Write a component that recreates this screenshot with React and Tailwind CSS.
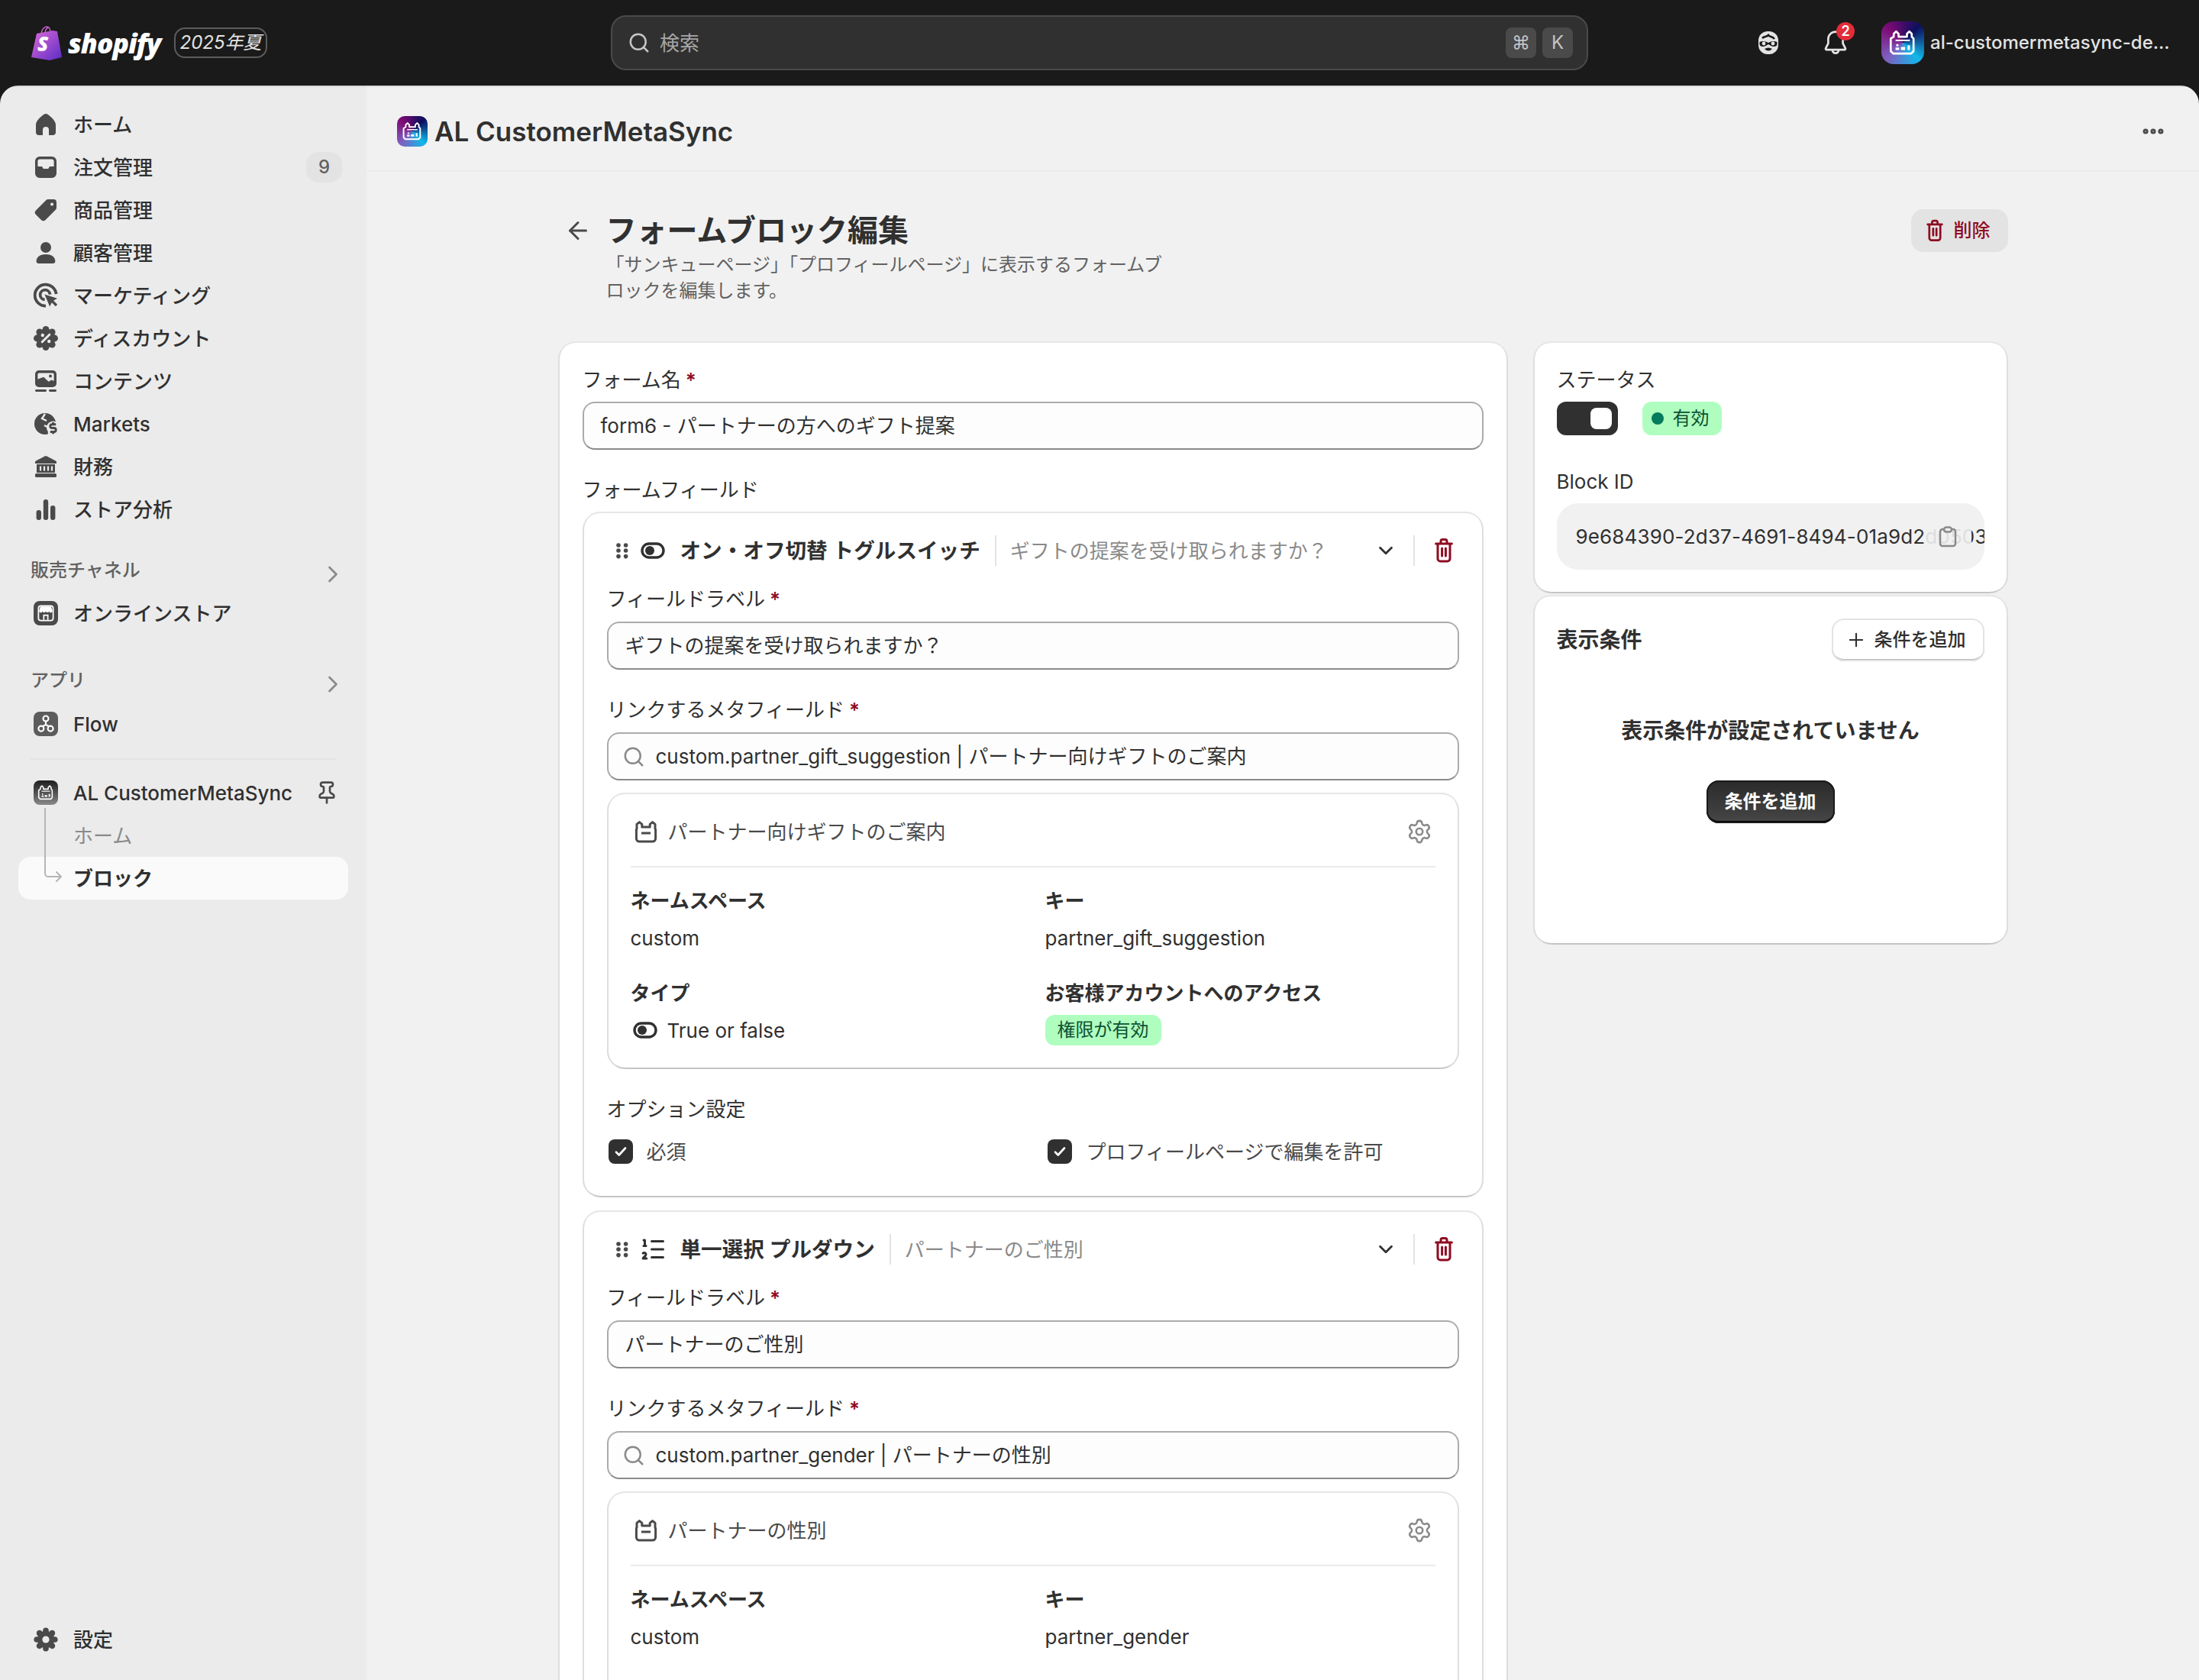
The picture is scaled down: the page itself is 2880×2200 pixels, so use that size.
import React from 'react';
import { Search, ChevronRight, ChevronDown, Plus, ArrowLeft, Settings, Pin, ListOrdered, Ellipsis } from 'lucide-react';

const GREY = '#4a4a4a';

function Svg({ className = 'w-10 h-10', children, view = '0 0 20 20' }) {
  return <svg viewBox={view} className={`${className} shrink-0`} fill="none">{children}</svg>;
}

function HomeIcon() {
  return <Svg><path fill={GREY} d="M10 3c-.5 0-1 .2-1.400.5C6.500 5.200 3.500 7.600 3.500 10.300V15a2 2 0 0 0 2 2H8v-3.500a2 2 0 0 1 4 0V17h2.500a2 2 0 0 0 2-2v-4.700c0-2.700-3-5.100-5.100-6.800A2.200 2.200 0 0 0 10 3z" /></Svg>;
}
function OrdersIcon() {
  return <Svg><path fill={GREY} fillRule="evenodd" d="M6 3h8a3 3 0 0 1 3 3v8a3 3 0 0 1-3 3H6a3 3 0 0 1-3-3V6a3 3 0 0 1 3-3zm-1.300 6.500h2.800l.9 1.500h3.200l.9-1.500h2.800V6c0-.7-.6-1.300-1.300-1.300H6c-.7 0-1.300.6-1.300 1.300v3.500z" /></Svg>;
}
function TagIcon() {
  return <Svg><path fill={GREY} fillRule="evenodd" d="M11.500 3H15a2 2 0 0 1 2 2v3.500a2 2 0 0 1-.6 1.400l-6.600 6.600a2 2 0 0 1-2.800 0l-3.500-3.500a2 2 0 0 1 0-2.800l6.600-6.600A2 2 0 0 1 11.500 3zM14 5.200a1 1 0 1 0 0 2 1 1 0 0 0 0-2z" /></Svg>;
}
function PersonIcon() {
  return <Svg><circle cx="10" cy="6.500" r="3.500" fill={GREY} /><path fill={GREY} d="M3.800 15.500C3.800 12.600 6.700 11 10 11s6.200 1.600 6.200 4.500c0 .9-.6 1.500-1.500 1.500H5.300c-.9 0-1.500-.6-1.500-1.500z" /></Svg>;
}
function TargetIcon() {
  return (
    <Svg>
      <path d="M10 16.800A7 7 0 1 1 16.800 9" stroke={GREY} strokeWidth="1.900" />
      <path d="M9.300 12.700A3.200 3.200 0 1 1 12.700 9.300" stroke={GREY} strokeWidth="1.900" />
      <path fill={GREY} d="M9.200 9.200l8.300 2.700-3.200 1.800-1.700 3.600z" />
      <path d="M14 13.500l3 3" stroke={GREY} strokeWidth="1.600" />
    </Svg>
  );
}
function ScallopIcon({ n, r, cr, pr }) {
  const dots = Array.from({ length: n }, (_, i) => {
    const a = (i / n) * Math.PI * 2;
    return <circle key={i} cx={10 + r * Math.cos(a)} cy={10 + r * Math.sin(a)} r={pr} fill={GREY} />;
  });
  return <>{dots}<circle cx="10" cy="10" r={cr} fill={GREY} /></>;
}
function DiscountIcon() {
  return (
    <Svg>
      <ScallopIcon n={8} r={5.800} cr={6.200} pr={2.200} />
      <path d="M12.400 7.600l-4.800 4.800" stroke="#ebebeb" strokeWidth="1.500" strokeLinecap="round" />
      <circle cx="7.900" cy="8" r="1.100" fill="#ebebeb" />
      <circle cx="12.100" cy="12" r="1.100" fill="#ebebeb" />
    </Svg>
  );
}
function ContentIcon() {
  return (
    <Svg>
      <rect x="3" y="3" width="14" height="11" rx="2.500" fill={GREY} />
      <path fill="#ebebeb" d="M4.700 8.800V5.700c0-.6.4-1 1-1h8.600c.6 0 1 .4 1 1v4.300l-1.500-.8-2 1.200-3.200-3z" />
      <circle cx="13" cy="6.700" r="1" fill={GREY} />
      <rect x="3" y="15.500" width="7.500" height="1.500" rx=".7" fill={GREY} />
      <rect x="12" y="15.500" width="5" height="1.500" rx=".7" fill={GREY} />
    </Svg>
  );
}
function MarketsIcon() {
  return (
    <Svg>
      <circle cx="9.500" cy="10" r="7" fill={GREY} />
      <path d="M9.500 3.500L7.500 6.500l3 1.500M9 11l3 1.500 0 5" stroke="#ebebeb" strokeWidth="1.200" />
      <circle cx="14.800" cy="12.500" r="4.300" fill="#ebebeb" />
      <path d="M16.600 10.400h-2.500a1.200 1.200 0 0 0 0 2.400h1.300a1.200 1.200 0 0 1 0 2.400h-2.500M14.800 9v1.400M14.800 15.200v1.400" stroke={GREY} strokeWidth="1.500" />
    </Svg>
  );
}
function BankIcon() {
  return (
    <Svg>
      <path fill={GREY} d="M9.300 3.200a1.500 1.500 0 0 1 1.400 0l5.800 3.100c.3.200.5.500.5.900V8H2.999v-.8c0-.4.200-.7.500-.9z" />
      <path fill={GREY} d="M4 8.500h12v5.500H4z" />
      <path d="M6.500 9.800v3M9 9.800v3M11.500 9.800v3M14 9.800v3" stroke="#ebebeb" strokeWidth="1.100" />
      <rect x="3" y="14.500" width="14" height="2.500" rx=".8" fill={GREY} />
    </Svg>
  );
}
function BarsIcon() {
  return (
    <Svg>
      <rect x="3.800" y="10.500" width="3.200" height="6.500" rx="1.600" fill={GREY} />
      <rect x="8.400" y="3.500" width="3.200" height="13.500" rx="1.600" fill={GREY} />
      <rect x="13" y="7.500" width="3.200" height="9.500" rx="1.600" fill={GREY} />
    </Svg>
  );
}
function GearIcon() {
  return (
    <Svg>
      <ScallopIcon n={8} r={5.900} cr={5.600} pr={1.900} />
      <circle cx="10" cy="10" r="2.300" fill="#ebebeb" />
    </Svg>
  );
}
function AppGlyph({ color = '#fff', className = 'w-10 h-10' }) {
  return (
    <svg viewBox="0 0 28 28" className={className} fill="none">
      <path d="M6.500 9V6.500l2-2 2 2V9h7V6.500l2-2 2 2V9l1.500 1.500V21l-2 2h-15l-2-2V10.500z" stroke={color} strokeWidth="1.700" strokeLinejoin="round" />
      <path d="M8 12h12" stroke={color} strokeWidth="1.300" />
      <path d="M8 20v-2h3v2zM12.500 20v-2.500h3.500V20zM18 16h2v4h-2z" fill={color} />
      <circle cx="9.500" cy="16" r="1" fill={color} />
    </svg>
  );
}
function BagOutline() {
  return (
    <Svg>
      <path d="M4 8V5.200l1.700-1.400 1.700 1.400V7h5.200V5.200l1.700-1.400L16 5.200V8l.3.8v5.700a2 2 0 0 1-2 2H5.700a2 2 0 0 1-2-2V8.800z" stroke={GREY} strokeWidth="1.500" strokeLinejoin="round" />
      <path d="M7 11h6" stroke={GREY} strokeWidth="1.500" />
    </Svg>
  );
}
function ToggleGlyph() {
  return (
    <Svg>
      <rect x="3" y="5.500" width="14" height="9" rx="4.500" stroke="#303030" strokeWidth="1.700" />
      <circle cx="8" cy="10" r="3" fill="#303030" />
    </Svg>
  );
}
function TrashIcon({ className = 'w-10 h-10' }) {
  return (
    <Svg className={className}>
      <path d="M8 5V4a1.200 1.200 0 0 1 1.200-1.200h1.600A1.200 1.200 0 0 1 12 4v1M4.800 5.500h10.400M6 5.500v9.800A1.700 1.700 0 0 0 7.700 17h4.600a1.700 1.700 0 0 0 1.700-1.700V5.500M8.800 8.500v5M11.200 8.500v5" stroke="#8e0b21" strokeWidth="1.500" strokeLinecap="round" />
    </Svg>
  );
}
function HandleIcon() {
  return (
    <Svg>
      {[6.500, 10, 13.800].map(y => (
        <g key={y}>
          <circle cx="7.500" cy={y} r="1.400" fill={GREY} />
          <circle cx="12.300" cy={y} r="1.400" fill={GREY} />
        </g>
      ))}
    </Svg>
  );
}

function ShopifyLogo() {
  return (
    <svg viewBox="0 0 40 45" className="w-10 h-[45px]" fill="none">
      <defs>
        <linearGradient id="bag" x1="0" y1="0" x2="1" y2="1">
          <stop offset="0" stopColor="#e06bd8" />
          <stop offset="1" stopColor="#5a2bc4" />
        </linearGradient>
      </defs>
      <path d="M13 11C13 5 17 1 20 1c3 0 5 3 5 8M18 10c0-4 2-7 4-8" stroke="#c95fd0" strokeWidth="1.400" />
      <path d="M7 10L28 6l6 1 6 34-16 4L0 41z" fill="url(#bag)" />
      <text x="8" y="33" fontSize="26" fontWeight="800" fontStyle="italic" fill="#fff" fontFamily="Open Sans">S</text>
    </svg>
  );
}

function TopBar() {
  return (
    <header className="h-[112px] flex items-center text-white">
      <div className="w-[800px] flex items-center pl-[41px]">
        <ShopifyLogo />
        <span className="ml-[8px] w-[123px] text-[35.500px] leading-[56px] font-extrabold italic tracking-[-1px] whitespace-nowrap font-[family-name:'Open_Sans',sans-serif]">shopify</span>
        <span className="ml-[16px] h-[40px] w-[122px] flex items-center justify-center rounded-[14px] border-2 border-[#5c5c5c] text-[24px] italic text-[#e3e3e3] whitespace-nowrap">2025年夏</span>
      </div>
      <div className="w-[1280px] h-[72px] flex items-center rounded-[20px] border-2 border-[#4a4a4a] bg-[#303030] pl-[20px] pr-[18px]">
        <Search className="w-[30px] h-[30px] text-[#c4c4c4]" strokeWidth={2} />
        <span className="ml-[12px] text-[26px] text-[#a6a6a6]">検索</span>
        <div className="ml-auto flex gap-2">
          <span className="w-10 h-10 rounded-[8px] bg-[#4a4a4a] text-[#c4c4c4] text-[24px] flex items-center justify-center">⌘</span>
          <span className="w-10 h-10 rounded-[8px] bg-[#4a4a4a] text-[#c4c4c4] text-[24px] flex items-center justify-center">K</span>
        </div>
      </div>
      <div className="flex-1 flex items-center pl-[222px]">
        <svg viewBox="0 0 28 32" className="w-[28px] h-[32px] shrink-0" fill="none">
          <rect x="1" y="1" width="26" height="30" rx="12" fill="#e3e3e3" />
          <path d="M6 10c3-3 5-1 8-4 2 3 5 1 8 5" stroke="#1a1a1a" strokeWidth="2.500" />
          <path d="M2.500 15c4-2 8-1 11.500 1 3.500-2 7.500-3 11.500-1v3c0 3-5 4-8 2l-3.500-2-3.500 2c-3 2-8 1-8-2z" fill="#1a1a1a" />
          <circle cx="8" cy="17" r="2.400" fill="#e3e3e3" />
          <circle cx="20" cy="17" r="2.400" fill="#e3e3e3" />
          <path d="M9 24q5-3 10 0q-5 5-10 0z" fill="#1a1a1a" />
        </svg>
        <div className="relative ml-[58px] w-[32px] h-[36px] shrink-0">
          <svg viewBox="0 0 20 22" className="w-[32px] h-[36px]" fill="none">
            <path d="M10 2a6 6 0 0 0-6 6v3.500L2 15.500a.8.8 0 0 0 .7 1.200h14.600a.8.800 0 0 0 .7-1.200l-2-4V8a6 6 0 0 0-6-6z" stroke="#e3e3e3" strokeWidth="1.700" strokeLinejoin="round" />
            <path d="M7.500 17a2.500 2.500 0 0 0 5 0" stroke="#e3e3e3" strokeWidth="1.700" />
          </svg>
          <span className="absolute -top-[9px] left-[17px] w-[24px] h-[24px] rounded-full bg-[#e22c38] text-white text-[18px] font-semibold leading-[24px] text-center">2</span>
        </div>
        <div className="ml-[44px] w-[56px] h-[56px] shrink-0 rounded-[16px] flex items-center justify-center bg-[conic-gradient(from_315deg,#7d0a74_0deg,#0c0f5e_90deg,#12b7e8_180deg,#7e60c0_270deg,#7d0a74_360deg)]">
          <AppGlyph className="w-[44px] h-[44px]" />
        </div>
        <span className="ml-[8px] text-[24px] text-[#e3e3e3] font-medium whitespace-nowrap">al-customermetasync-de...</span>
      </div>
    </header>
  );
}

const navItems = [
  { label: 'ホーム', icon: HomeIcon },
  { label: '注文管理', icon: OrdersIcon, count: 9 },
  { label: '商品管理', icon: TagIcon },
  { label: '顧客管理', icon: PersonIcon },
  { label: 'マーケティング', icon: TargetIcon },
  { label: 'ディスカウント', icon: DiscountIcon },
  { label: 'コンテンツ', icon: ContentIcon },
  { label: 'Markets', icon: MarketsIcon },
  { label: '財務', icon: BankIcon },
  { label: 'ストア分析', icon: BarsIcon },
];

function NavRow({ icon: Icon, label, count }) {
  return (
    <div className="h-[56px] flex items-center pl-4 pr-2 text-[26px] font-medium text-[#303030]">
      <Icon />
      <span className="ml-[16px]">{label}</span>
      {count && <span className="ml-auto w-[47px] h-[40px] rounded-[16px] bg-[#e3e3e3] text-[24px] text-[#616161] flex items-center justify-center">{count}</span>}
    </div>
  );
}

function SectionLabel({ children }) {
  return (
    <div className="h-[40px] pl-4 pr-2 flex items-center justify-between text-[24px] font-medium text-[#616161]">
      {children}
      <ChevronRight className="w-[36px] h-[36px] mt-[10px] -mr-[6px] text-[#8a8a8a]" strokeWidth={1.800} />
    </div>
  );
}

function AppTile({ className, children }) {
  return <span className={`ml-1 mr-1 w-8 h-8 rounded-[8px] flex items-center justify-center shrink-0 ${className}`}>{children}</span>;
}

function Sidebar() {
  return (
    <aside className="w-[480px] shrink-0 bg-[#ebebeb] px-6 pt-[23px] flex flex-col shadow-[inset_0_3px_2px_-2px_rgba(0,0,0,0.2)]">
      {navItems.map(item => <NavRow key={item.label} {...item} />)}

      <div className="mt-[32px]"><SectionLabel>販売チャネル</SectionLabel></div>
      <div className="mt-[8px] h-[56px] flex items-center pl-4 text-[26px] font-medium text-[#303030]">
        <AppTile className="bg-[#4a4a4a]">
          <svg viewBox="0 0 16 16" className="w-[28px] h-[28px]" fill="none">
            <rect x="2.500" y="2.500" width="11" height="11" rx="1.800" stroke="#fff" strokeWidth="1" />
            <path d="M3 6.200L4 3h8l1 3.200a1.200 1.200 0 0 1-2.500.3 1.300 1.300 0 0 1-2.500 0 1.300 1.300 0 0 1-2.500 0A1.200 1.200 0 0 1 3 6.200z" fill="#fff" />
            <path d="M6.500 13V9.500h3V13" stroke="#fff" strokeWidth="1" />
          </svg>
        </AppTile>
        <span className="ml-[16px]">オンラインストア</span>
      </div>

      <div className="mt-[40px]"><SectionLabel>アプリ</SectionLabel></div>
      <div className="mt-[9px] h-[56px] flex items-center pl-4 text-[26px] font-medium text-[#303030]">
        <AppTile className="bg-[#5c5c5c]">
          <svg viewBox="0 0 16 16" className="w-[28px] h-[28px]" fill="none">
            <circle cx="8" cy="4" r="2" stroke="#fff" strokeWidth="1.200" />
            <circle cx="4.500" cy="11.500" r="2" stroke="#fff" strokeWidth="1.200" />
            <circle cx="11.500" cy="11.500" r="2" stroke="#fff" strokeWidth="1.200" />
            <path d="M8 6v2.500L5.500 10M8 8.500l2.500 1.500" stroke="#fff" strokeWidth="1.200" />
          </svg>
        </AppTile>
        <span className="ml-[16px]">Flow</span>
      </div>

      <div className="mt-[17px] mx-4 h-[2px] bg-[#e3e3e3]" />

      <div className="relative mt-[15px]">
        <div className="h-[56px] flex items-center pl-4 pr-2 text-[26px] font-medium text-[#303030]">
          <AppTile className="bg-gradient-to-b from-[#1f1f1f] to-[#8a8a8a]">
            <AppGlyph className="w-[26px] h-[26px]" />
          </AppTile>
          <span className="ml-[16px] whitespace-nowrap">AL CustomerMetaSync</span>
          <Pin className="ml-auto mr-[4px] w-[32px] h-[32px] text-[#4a4a4a]" strokeWidth={2} />
        </div>
        <div className="h-[56px] flex items-center pl-[72px] text-[26px] text-[#8a8a8a]">ホーム</div>
        <div className="h-[56px] flex items-center pl-[72px] text-[26px] font-semibold text-[#303030] bg-[#fafafa] rounded-[16px] w-[432px]">ブロック</div>
        <svg className="absolute left-[32px] top-[48px] w-[28px] h-[100px]" viewBox="0 0 28 100" fill="none">
          <path d="M3 0v86a4 4 0 0 0 4 4h17M18 84l6 6-6 6" stroke="#b5b5b5" strokeWidth="2" strokeLinecap="round" strokeLinejoin="round" />
        </svg>
      </div>

      <div className="mt-auto mb-[25px]">
        <NavRow icon={GearIcon} label="設定" />
      </div>
    </aside>
  );
}

const CARD = 'bg-white shadow-[inset_0_2px_0_#e6e6e6,inset_2px_0_0_#dedede,inset_-2px_0_0_#dedede,inset_0_-2px_0_#c4c4c4]';

function FieldLabel({ children, required, className = '' }) {
  return (
    <div className={`h-[32px] flex items-center text-[26px] text-[#303030] ${className}`}>
      {children}
      {required && <span className="ml-[6px] text-[#8e0b21] font-semibold">*</span>}
    </div>
  );
}

function TextBox({ children, search }) {
  return (
    <div className={`h-[63px] flex items-center rounded-[16px] border-2 border-[#ababab] border-b-[#8a8a8a] bg-[#fdfdfd] text-[26px] text-[#303030] whitespace-nowrap ${search ? 'pl-[14px]' : 'pl-[22px]'}`}>
      {search && <Search className="w-[30px] h-[30px] mr-[14px] ml-[4px] text-[#8a8a8a]" strokeWidth={2} />}
      {children}
    </div>
  );
}

function MetaHead({ children }) {
  return <div className="h-[32px] flex items-center text-[26px] font-semibold text-[#303030]">{children}</div>;
}
function MetaVal({ children, className = 'h-[32px] mt-[17px]' }) {
  return <div className={`flex items-center text-[26px] text-[#303030] ${className}`}>{children}</div>;
}

function MetafieldCard({ title, name, partial }) {
  return (
    <div className={`${CARD} mt-[16px] rounded-[24px] px-[31px] pt-[27px] ${partial ? 'pb-[120px]' : 'pb-[31px]'}`}>
      <div className="h-[48px] flex items-center text-[26px] text-[#4a4a4a]">
        <BagOutline />
        <span className="ml-[9px]">{title}</span>
        <Settings className="ml-auto mr-[4px] w-[34px] h-[34px] text-[#8a8a8a]" strokeWidth={1.800} />
      </div>
      <div className="mt-[21px] h-[2px] bg-[#ebebeb]" />
      <div className="mt-[27px] grid grid-cols-[543px_1fr]">
        <div>
          <MetaHead>ネームスペース</MetaHead>
          <MetaVal>custom</MetaVal>
        </div>
        <div>
          <MetaHead>キー</MetaHead>
          <MetaVal>{name}</MetaVal>
        </div>
        {!partial && (
          <>
            <div className="mt-[40px]">
              <MetaHead>タイプ</MetaHead>
              <MetaVal className="h-[40px] mt-[13px]">
                <span className="-ml-[1px]"><ToggleGlyph /></span>
                <span className="ml-[9px]">True or false</span>
              </MetaVal>
            </div>
            <div className="mt-[40px]">
              <MetaHead>お客様アカウントへのアクセス</MetaHead>
              <div className="mt-[13px] w-[152px] h-[40px] rounded-[12px] bg-[#affebf] text-[24px] text-[#0c5132] flex items-center justify-center">権限が有効</div>
            </div>
          </>
        )}
      </div>
    </div>
  );
}

function Check({ label }) {
  return (
    <div className="flex items-center h-[32px] text-[26px] text-[#4a4a4a]">
      <span className="w-8 h-8 rounded-[8px] bg-[#303030] flex items-center justify-center">
        <svg viewBox="0 0 16 16" className="w-6 h-6" fill="none"><path d="M4 8.500l2.500 2.500L12 5" stroke="#fff" strokeWidth="1.800" strokeLinecap="round" strokeLinejoin="round" /></svg>
      </span>
      <span className={label === '必須' ? 'ml-[18px]' : 'ml-[19px]'}>{label}</span>
    </div>
  );
}

function FieldCard({ icon, title, sub, link, metaTitle, metaName, partial, className = '' }) {
  return (
    <div className={`${CARD} rounded-[24px] px-[32px] pt-[23px] pb-[44px] ${className}`}>
      <div className="h-[56px] flex items-center whitespace-nowrap">
        <HandleIcon />
        {icon}
        <span className="ml-[16px] mt-[2px] text-[27.600px] font-semibold text-[#303030]">{title}</span>
        <span className="ml-[19px] w-[2px] h-[40px] bg-[#e3e3e3]" />
        <span className="ml-[18px] text-[26px] text-[#8a8a8a]">{sub}</span>
        <ChevronDown className="ml-auto mr-[5px] w-[30px] h-[30px] text-[#303030]" strokeWidth={2.200} />
        <span className="ml-[16px] w-[2px] h-[40px] bg-[#e3e3e3]" />
        <span className="ml-[18px]"><TrashIcon /></span>
      </div>
      <FieldLabel required className="mt-[19px]">フィールドラベル</FieldLabel>
      <div className="mt-[14px]"><TextBox>{sub}</TextBox></div>
      <FieldLabel required className="mt-[36px]">リンクするメタフィールド</FieldLabel>
      <div className="mt-[14px]"><TextBox search>{link}</TextBox></div>
      <MetafieldCard title={metaTitle} name={metaName} partial={partial} />
      {!partial && (
        <>
          <FieldLabel className="mt-[36px]">オプション設定</FieldLabel>
          <div className="mt-[24px] grid grid-cols-[575px_1fr] pl-[2px]">
            <Check label="必須" />
            <Check label="プロフィールページで編集を許可" />
          </div>
        </>
      )}
    </div>
  );
}

function RightColumn() {
  return (
    <div className="w-[622px] shrink-0">
      <div className={`${CARD} rounded-[24px] px-[31px] pt-[34px] pb-[31px]`}>
        <FieldLabel>ステータス</FieldLabel>
        <div className="mt-[13px] flex items-center">
          <span className="w-[80px] h-[44px] rounded-[12px] bg-[#303030] flex items-center justify-end pr-[8px]">
            <span className="w-[28px] h-[28px] rounded-[8px] bg-white" />
          </span>
          <span className="ml-[32px] w-[104px] h-[44px] rounded-[12px] bg-[#affebf] text-[24px] text-[#0c5132] flex items-center pl-[12px]">
            <span className="w-[16px] h-[16px] rounded-full bg-[#047b5d]" />
            <span className="ml-[12px]">有効</span>
          </span>
        </div>
        <FieldLabel className="mt-[44px]">Block ID</FieldLabel>
        <div className="relative mt-[13px] h-[87px] rounded-[28px] bg-[#f1f1f1] overflow-hidden flex items-center pl-[25px] text-[26px] tracking-[0.15px] text-[#303030] whitespace-nowrap">
          9e684390-2d37-4691-8494-01a9d2d05037
          <span className="absolute left-[481px] top-0 bottom-0 w-[62px] bg-[#f1f1f1]/90 flex items-center justify-center">
            <svg viewBox="0 0 24 28" className="w-[24px] h-[28px]" fill="none">
              <path d="M7 4H5a3 3 0 0 0-3 3v16a3 3 0 0 0 3 3h14a3 3 0 0 0 3-3V7a3 3 0 0 0-3-3h-2" stroke="#8a8a8a" strokeWidth="2.500" />
              <rect x="7" y="1.500" width="10" height="6" rx="3" stroke="#8a8a8a" strokeWidth="2.500" />
            </svg>
          </span>
        </div>
      </div>
      <div className={`${CARD} mt-[2px] h-[458px] rounded-[24px] px-[31px] pt-[31px] flex flex-col`}>
        <div className="flex items-center justify-between">
          <span className="text-[28px] font-semibold text-[#303030]">表示条件</span>
          <span className="w-[200px] h-[56px] rounded-[16px] bg-white shadow-[inset_0_0_0_2px_#e3e3e3,inset_0_-3px_0_#b5b5b5] flex items-center pl-[18px] text-[24px] font-medium text-[#303030]">
            <Plus className="w-[28px] h-[28px]" strokeWidth={1.800} />
            <span className="ml-[10px]">条件を追加</span>
          </span>
        </div>
        <div className="mt-[69px] h-[44px] flex items-center justify-center text-[28px] font-semibold text-[#303030]">表示条件が設定されていません</div>
        <span className="mt-[43px] self-center w-[168px] h-[56px] rounded-[16px] bg-gradient-to-b from-[#2a2a2a] to-[#474747] shadow-[inset_0_0_0_2px_#1a1a1a,inset_0_-3px_0_#000] flex items-center justify-center text-[24px] font-semibold text-white">条件を追加</span>
      </div>
    </div>
  );
}

function Content() {
  return (
    <main className="flex-1 bg-[#f1f1f1] overflow-hidden shadow-[inset_0_3px_2px_-2px_rgba(0,0,0,0.2)]">
      <div className="h-[113px] pt-[8px] border-b-2 border-[#ebebeb] flex items-center pl-[40px] pr-[40px]">
        <span className="w-10 h-10 rounded-[10px] flex items-center justify-center bg-[conic-gradient(from_315deg,#7d0a74_0deg,#0c0f5e_90deg,#12b7e8_180deg,#7e60c0_270deg,#7d0a74_360deg)]">
          <AppGlyph className="w-[32px] h-[32px]" />
        </span>
        <span className="ml-[9px] mt-[2px] text-[35px] font-semibold text-[#303030]">AL CustomerMetaSync</span>
        <Ellipsis className="ml-auto mr-[3px] w-[34px] h-[34px] text-[#4a4a4a]" strokeWidth={3} />
      </div>

      <div className="w-[1899px] mx-auto">
        <div className="mt-[48px] flex justify-between">
          <div>
            <div className="flex items-center h-[57px]">
              <ArrowLeft className="ml-[8px] w-[36px] h-[36px] text-[#4a4a4a]" strokeWidth={2} />
              <h1 className="ml-[19px] text-[40px] font-bold text-[#303030]">フォームブロック編集</h1>
            </div>
            <p className="ml-[63px] w-[750px] text-[24px] leading-[34px] text-[#616161]">「サンキューページ」「プロフィールページ」に表示するフォームブロックを編集します。</p>
          </div>
          <span className="w-[127px] h-[56px] mt-[1px] rounded-[16px] bg-[#e3e3e3] flex items-center pl-[13px] text-[24px] font-medium text-[#8e0b21]">
            <TrashIcon className="w-[36px] h-[36px]" />
            <span className="ml-[7px]">削除</span>
          </span>
        </div>

        <div className="mt-[49px] flex justify-between items-start">
          <div className={`${CARD} w-[1244px] rounded-[24px] px-[32px] pt-[34px] pb-[32px]`}>
            <FieldLabel required>フォーム名</FieldLabel>
            <div className="mt-[13px]"><TextBox>form6 - パートナーの方へのギフト提案</TextBox></div>
            <FieldLabel className="mt-[36px]">フォームフィールド</FieldLabel>
            <FieldCard
              className="mt-[13px]"
              icon={<ToggleGlyph />}
              title="オン・オフ切替 トグルスイッチ"
              sub="ギフトの提案を受け取られますか？"
              link="custom.partner_gift_suggestion | パートナー向けギフトのご案内"
              metaTitle="パートナー向けギフトのご案内"
              metaName="partner_gift_suggestion"
            />
            <FieldCard
              className="mt-[17px]"
              icon={<span className="w-10 h-10 flex items-center justify-center"><ListOrdered className="w-[36px] h-[36px] text-[#303030]" strokeWidth={2} /></span>}
              title="単一選択 プルダウン"
              sub="パートナーのご性別"
              link="custom.partner_gender | パートナーの性別"
              metaTitle="パートナーの性別"
              metaName="partner_gender"
              partial
            />
          </div>
          <RightColumn />
        </div>
      </div>
    </main>
  );
}

export default function App() {
  return (
    <div lang="ja" className="w-[2880px] h-[2200px] overflow-hidden bg-[#1a1a1a] font-[family-name:Inter,'Noto_Sans_CJK_JP',sans-serif]">
      <TopBar />
      <div className="h-[2088px] flex rounded-t-[24px] overflow-hidden">
        <Sidebar />
        <Content />
      </div>
    </div>
  );
}
